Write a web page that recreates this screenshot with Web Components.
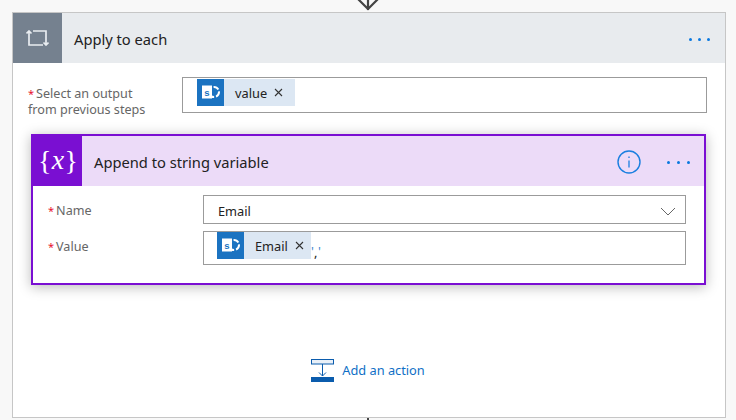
<!DOCTYPE html>
<html>
<head>
<meta charset="utf-8">
<style>
  html, body { margin: 0; height: 100%; background: #f8f8f8; overflow: hidden; }
  body { font-family: "Noto Sans", "Open Sans", sans-serif; }
</style>
</head>
<body>
<flow-page></flow-page>
<script>
const SP_ICON = `<svg width="27" height="27" viewBox="0 0 27 27">
  <rect width="27" height="27" fill="#1b73c1"/>
  <circle cx="17" cy="13" r="5" fill="none" stroke="#fff" stroke-width="2" stroke-dasharray="5.500 2"/>
  <rect x="5" y="6.500" width="10" height="13" fill="#fff"/>
  <text x="10" y="16.500" text-anchor="middle" font-family="Liberation Sans" font-weight="700" font-size="9.500" fill="#1b73c1">s</text>
</svg>`;

class FlowToken extends HTMLElement {
  constructor() {
    super();
    this.attachShadow({ mode: "open" });
    this.shadowRoot.innerHTML = `
      <style>
        :host {
          display: inline-flex;
          align-items: center;
          height: 27px;
          background: #dce7f3;
          color: #222;
          font-size: 12.800px;
        }
        svg { display: block; flex-shrink: 0; }
        .label { padding: 1px 0 0 var(--token-pad, 11px); line-height: 26px; }
        .close { margin-left: 7px; margin-right: var(--token-end, 12px); display: block; }
      </style>
      ${SP_ICON}
      <span class="label"><slot></slot></span>
      <svg class="close" width="9" height="9" viewBox="0 0 9 9">
        <path d="M1 1l7 7M8 1L1 8" stroke="#333" stroke-width="1.100" fill="none"/>
      </svg>
    `;
  }
}

class FlowField extends HTMLElement {
  constructor() {
    super();
    this.attachShadow({ mode: "open" });
    this.shadowRoot.innerHTML = `
      <style>
        :host {
          display: flex;
          align-items: flex-start;
          color: #666;
          font-size: 12.600px;
          line-height: 16px;
        }
        .label { width: var(--label-width, 155px); flex-shrink: 0; padding-top: var(--label-top, 0); box-sizing: border-box; }
        .req { color: #e8112d; font-size: 11px; margin-right: 2px; }
        .input {
          flex: 1;
          box-sizing: border-box;
          height: var(--input-height, 35px);
          border: 1px solid #9b9b9b;
          background: #fff;
          padding: var(--input-pad, 1px 0 0 14px);
          display: flex;
          align-items: flex-start;
          color: #222;
          font-size: 12.800px;
        }
      </style>
      <div class="label"><span class="req">*</span><slot name="label"></slot></div>
      <div class="input"><slot></slot></div>
    `;
  }
}

class FlowCard extends HTMLElement {
  static get observedAttributes() { return ["heading"]; }
  constructor() {
    super();
    this.attachShadow({ mode: "open" });
    this.shadowRoot.innerHTML = `
      <style>
        :host { display: block; box-sizing: border-box; background: #fff; }
        .head {
          display: flex;
          align-items: center;
          height: 50px;
          background: var(--head-bg);
          color: #222;
          font-size: 14.700px;
        }
        .icon {
          width: var(--icon-width, 49px);
          height: 100%;
          background: var(--icon-bg);
          display: flex;
          align-items: center;
          justify-content: center;
          flex-shrink: 0;
        }
        .title { flex: 1; padding: 2px 0 0 12px; }
        .actions { display: flex; align-items: center; padding-top: 2px; }
      </style>
      <div class="head">
        <div class="icon"><slot name="icon"></slot></div>
        <div class="title"></div>
        <div class="actions"><slot name="actions"></slot></div>
      </div>
      <slot></slot>
    `;
  }
  attributeChangedCallback(name, oldValue, value) {
    this.shadowRoot.querySelector(".title").textContent = value;
  }
}

class FlowDots extends HTMLElement {
  constructor() {
    super();
    this.attachShadow({ mode: "open" });
    this.shadowRoot.innerHTML = `
      <style>
        :host { display: flex; gap: 6px; }
        i { display: block; width: 3px; height: 3px; background: #0a78e0; border-radius: 50%; }
      </style>
      <i></i><i></i><i></i>
    `;
  }
}

class AddAction extends HTMLElement {
  constructor() {
    super();
    this.attachShadow({ mode: "open" });
    this.shadowRoot.innerHTML = `
      <style>
        :host {
          display: flex;
          align-items: center;
          justify-content: center;
          gap: 8px;
          color: #0f6fc6;
          font-size: 12.800px;
        }
        svg { display: block; }
        span { position: relative; top: -1px; }
      </style>
      <svg width="23" height="23" viewBox="0 0 23 23">
        <rect x=".5" y=".5" width="22" height="4.500" fill="#e9f0f8" stroke="#0b5cad"/>
        <path d="M11.500 5v12M8 13.500l3.500 3.500 3.500-3.500" fill="none" stroke="#0b5cad"/>
        <rect y="18" width="23" height="5" fill="#0b5cad"/>
      </svg>
      <span><slot></slot></span>
    `;
  }
}

class FlowPage extends HTMLElement {
  constructor() {
    super();
    this.attachShadow({ mode: "open" });
    this.shadowRoot.innerHTML = `
      <style>
        :host { display: block; width: 736px; height: 420px; position: relative; overflow: hidden; }
        .arrow { position: absolute; left: 356px; top: 0; }
        .stub { position: absolute; left: 367px; top: 418px; width: 2px; height: 2px; background: #444; }
        .outer {
          position: absolute; left: 12px; top: 12px; width: 714px; height: 406px;
          box-sizing: border-box;
          border: 1px solid #c6c6c6;
          --head-bg: #e8ebee;
          --icon-bg: #75818f;
        }
        .select-row {
          --label-width: 154px;
          --input-height: 36px;
          --label-top: 9px;
          margin: 14px 18px 0 15px;
        }
        .inner {
          display: block;
          margin: 16px 19px 0 18px;
          height: 151px;
          border: 2px solid #7a0fd2;
          box-shadow: 0 2px 12px rgba(0,0,0,.28);
          --head-bg: #ecdbf8;
          --icon-bg: #7a0fd2;
          --icon-width: 49px;
        }
        .fields { display: flex; flex-direction: column; gap: 7px; padding: 9px 18px 0 15px; }
        .name { --input-height: 29px; --label-top: 8px; --input-pad: 7px 0 0 14px; }
        .value { --input-height: 34px; --label-top: 8px; --input-pad: 0 0 0 13px; --token-end: 7px; --token-pad: 11px; }
        .comma { display: flex; margin: 0 0 0 3px; height: 32px; position: relative; width: 12px; }
        .comma span { position: absolute; }
        .comma .q1 { left: -3px; top: 11px; color: #3f86d0; }
        .comma .c { left: 0; top: 12px; color: #222; }
        .comma .q2 { left: 4px; top: 11px; color: #3f86d0; }
        .chevron { margin-left: auto; margin-right: 9px; margin-top: 4px; display: block; }
        .info { margin-right: 26px; display: block; }
        .inner flow-dots { margin-right: 14px; gap: 7px; }
        .top-dots { margin-right: 15px; }
        add-action { position: absolute; left: 0; right: 0; top: 346px; margin-right: 2px; }
      </style>
      <svg class="arrow" width="24" height="12" viewBox="0 0 24 12">
        <path d="M2-1l10 10L22-1M12-1v11" fill="none" stroke="#444" stroke-width="2.200"/>
      </svg>
      <flow-card class="outer" heading="Apply to each">
        <svg slot="icon" width="23" height="16" viewBox="0 0 23 16" fill="none" stroke="#e9edf1" stroke-width="1.700">
          <path d="M3 1v14h14M7 1h13v14M.5 3.500 3 1l2.500 2.500M17.500 12.500 20 15l2.500-2.500"/>
        </svg>
        <flow-dots slot="actions" class="top-dots"></flow-dots>
        <flow-field class="select-row">
          <span slot="label">Select an output<br>from previous steps</span>
          <flow-token>value</flow-token>
        </flow-field>
        <flow-card class="inner" heading="Append to string variable">
          <svg slot="icon" width="40" height="32" viewBox="0 0 40 32" fill="#fff" font-family="Liberation Serif" font-size="28">
            <text x="0" y="25">{</text>
            <text x="20" y="24" text-anchor="middle" font-style="italic">x</text>
            <text x="40" y="25" text-anchor="end">}</text>
          </svg>
          <svg slot="actions" class="info" width="24" height="24" viewBox="0 0 24 24" fill="none" stroke="#1a7fe0">
            <circle cx="12" cy="12" r="11" stroke-width="1.400"/>
            <path d="M12 10.500v7" stroke-width="1.300"/>
            <path d="M12 6.500v1.500" stroke-width="1.300"/>
          </svg>
          <flow-dots slot="actions"></flow-dots>
          <div class="fields">
            <flow-field class="name">
              <span slot="label">Name</span>
              <span>Email</span>
              <svg class="chevron" width="16" height="9" viewBox="0 0 16 9"><path d="M1 1l7 7 7-7" fill="none" stroke="#666"/></svg>
            </flow-field>
            <flow-field class="value">
              <span slot="label">Value</span>
              <flow-token>Email</flow-token>
              <span class="comma"><span class="q1">'</span><span class="c">,</span><span class="q2">'</span></span>
            </flow-field>
          </div>
        </flow-card>
        <add-action>Add an action</add-action>
      </flow-card>
      <div class="stub"></div>
    `;
  }
}

customElements.define("flow-token", FlowToken);
customElements.define("flow-field", FlowField);
customElements.define("flow-card", FlowCard);
customElements.define("flow-dots", FlowDots);
customElements.define("add-action", AddAction);
customElements.define("flow-page", FlowPage);
</script>
</body>
</html>
